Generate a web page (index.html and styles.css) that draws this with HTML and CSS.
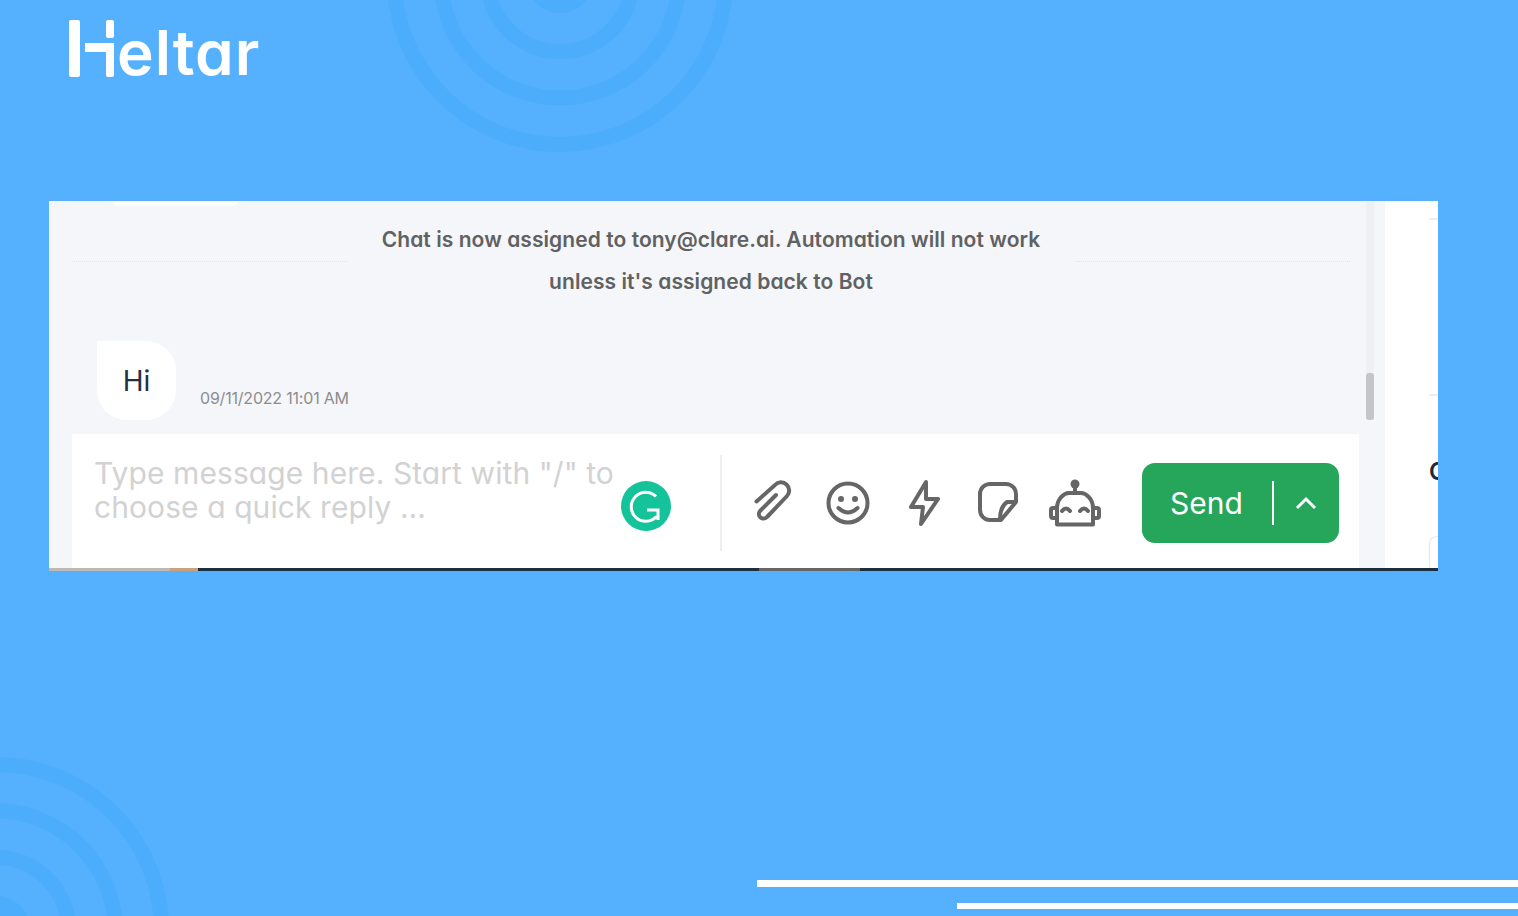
FILE: index.html
```html
<!DOCTYPE html>
<html lang="en">
<head>
    <meta charset="UTF-8">
    <title>Heltar Chat</title>
    <link rel="stylesheet" href="styles.css">
</head>
<body>
    <svg class="rings" width="1518" height="916" viewBox="0 0 1518 916" aria-hidden="true">
        <g class="ring-set">
            <circle cx="560" cy="-21" r="165.5"></circle>
            <circle cx="560" cy="-21" r="119"></circle>
            <circle cx="560" cy="-21" r="72.5"></circle>
            <circle class="ring-core" cx="560" cy="-21" r="34"></circle>
        </g>
        <g class="ring-set">
            <circle cx="-4" cy="930" r="165.5"></circle>
            <circle cx="-4" cy="930" r="119"></circle>
            <circle cx="-4" cy="930" r="72.5"></circle>
            <circle class="ring-core" cx="-4" cy="930" r="34"></circle>
        </g>
    </svg>

    <div class="page">
        <header class="header">
            <div class="logo">
                <div class="logo-h">
                    <span class="logo-stem"></span>
                    <div class="logo-right">
                        <span class="logo-stub"></span>
                        <span class="logo-bar"></span>
                        <span class="logo-leg"></span>
                    </div>
                </div>
                <span class="logo-text">eltar</span>
            </div>
        </header>

        <div class="card">
            <div class="card-body">
                <div class="chat">
                    <div class="thread">
                        <div class="prev-bubble"></div>
                        <div class="system-msg">
                            <span class="system-line"></span>
                            <p>Chat is now assigned to tony@clare.ai. Automation will not work<br>unless it's assigned back to Bot</p>
                            <span class="system-line"></span>
                        </div>
                        <div class="msg-row">
                            <div class="bubble">Hi</div>
                            <span class="msg-time">09/11/2022 11:01 AM</span>
                        </div>
                    </div>

                    <div class="composer">
                        <div class="input-area">
                            <div class="placeholder">Type message here. Start with "/" to<br>choose a quick reply ...</div>
                            <svg class="grammarly" width="50" height="50" viewBox="0 0 50 50">
                                <circle cx="25" cy="25" r="25" fill="#15c39a"></circle>
                                <path d="M35 15.5A14.5 14.5 0 1 0 35.5 35.5M26 29H37V39" fill="none" stroke="#fff" stroke-width="3"></path>
                            </svg>
                        </div>
                        <div class="tools">
                            <span class="tool-cell">
                                <svg class="tool" width="40" height="46" viewBox="0 0 40 46">
                                    <path d="M3.5 21.5L22 5a8 8 0 0 1 12 11L14 37a4.5 4.5 0 0 1-7-6L23 15"></path>
                                </svg>
                            </span>
                            <span class="tool-cell">
                                <svg class="tool" width="48" height="48" viewBox="0 0 48 48">
                                    <circle cx="24" cy="24" r="19.5"></circle>
                                    <circle class="tool-fill" cx="17" cy="20" r="3"></circle>
                                    <circle class="tool-fill" cx="31" cy="20" r="3"></circle>
                                    <path d="M14.5 29Q24 38 33.5 29"></path>
                                </svg>
                            </span>
                            <span class="tool-cell">
                                <svg class="tool" width="34" height="48" viewBox="0 0 34 48">
                                    <path d="M19 3L4 28H16L14 45L31 20H19Z"></path>
                                </svg>
                            </span>
                            <span class="tool-cell">
                                <svg class="tool" width="44" height="44" viewBox="0 0 44 44">
                                    <path d="M13 3H29a10 10 0 0 1 10 10V21L24 39H13a10 10 0 0 1-10-10V13a10 10 0 0 1 10-10Z"></path>
                                    <path d="M38 21H30Q23 26 23 38"></path>
                                </svg>
                            </span>
                            <span class="tool-cell">
                                <svg class="tool" width="52" height="48" viewBox="0 0 52 48">
                                    <circle class="tool-fill" cx="26" cy="5" r="4.5"></circle>
                                    <path d="M26 8V14M8 45.5V29C8 20 15 14 20 14H32C37 14 44 20 44 29V45.5ZM8 29H4a2 2 0 0 0-2 2v6a2 2 0 0 0 2 2H8M44 29H48a2 2 0 0 1 2 2v6a2 2 0 0 1-2 2H44M13 32q4-5 8 0M31 32q4-5 8 0"></path>
                                </svg>
                            </span>
                        </div>
                        <button class="send-btn">
                            <span class="send-label">Send</span>
                            <span class="send-sep"></span>
                            <svg width="24" height="16" viewBox="0 0 24 16">
                                <path d="M3 13L12 4L21 13" fill="none" stroke="#fff" stroke-width="3"></path>
                            </svg>
                        </button>
                    </div>
                </div>

                <div class="gutter">
                    <div class="scroll-track"><div class="scroll-thumb"></div></div>
                </div>

                <aside class="side">
                    <span class="side-tick"></span>
                    <span class="side-tick side-tick-2"></span>
                    <div class="side-title">C</div>
                    <div class="side-box"></div>
                </aside>
            </div>

            <div class="strip">
                <span class="strip-gray"></span>
                <span class="strip-tan"></span>
                <span class="strip-dark"></span>
                <span class="strip-mid"></span>
                <span class="strip-rest"></span>
            </div>
        </div>

        <footer class="footer">
            <span class="bar-long"></span>
            <span class="bar-short"></span>
        </footer>
    </div>
</body>
</html>
```

FILE: styles.css
```css
* {
    box-sizing: border-box;
}

html, body {
    margin: 0;
    height: 100%;
}

body {
    font-family: Inter, "Liberation Sans", sans-serif;
    font-feature-settings: "cv11";
    background-color: #55b0fd;
    overflow: hidden;
}

.rings {
    position: absolute;
    left: 0;
    top: 0;
}

.ring-set circle {
    fill: none;
    stroke: #4badfc;
    stroke-width: 15;
}

.ring-set .ring-core {
    fill: #4badfc;
    stroke: none;
}

.page {
    position: relative;
    height: 916px;
    display: flex;
    flex-direction: column;
}

/* header + logo */
.header {
    height: 201px;
    padding: 20px 0 0 69px;
}

.logo {
    display: flex;
    align-items: flex-end;
    height: 57px;
    color: #fff;
}

.logo-h {
    display: flex;
    gap: 5px;
    height: 57px;
}

.logo-stem {
    width: 11px;
    background: #fff;
    border-radius: 2px;
}

.logo-right {
    width: 29px;
    display: flex;
    flex-direction: column;
    align-items: flex-end;
}

.logo-stub {
    width: 8px;
    height: 18px;
    margin-bottom: 5px;
    background: #fff;
    border-radius: 2px;
}

.logo-bar {
    width: 29px;
    height: 9px;
    background: #fff;
}

.logo-leg {
    width: 8px;
    flex: 1;
    background: #fff;
    border-radius: 0 0 2px 2px;
}

.logo-text {
    margin-left: 3px;
    font-size: 62px;
    font-weight: 600;
    line-height: 57px;
    letter-spacing: 1px;
    position: relative;
    top: 4px;
}

/* card */
.card {
    margin-left: 49px;
    width: 1389px;
    height: 370px;
    display: flex;
    flex-direction: column;
    background: #fff;
}

.card-body {
    flex: 1;
    display: flex;
    min-height: 0;
}

.chat {
    width: 1310px;
    flex-shrink: 0;
    padding-left: 23px;
    display: flex;
    flex-direction: column;
    background: #f4f6fa;
}

.thread {
    flex: 1;
    min-height: 0;
    position: relative;
}

.prev-bubble {
    position: absolute;
    left: 41px;
    top: 0;
    width: 125px;
    height: 5px;
    background: #fff;
    border-radius: 0 0 20px 20px;
}

.system-msg {
    display: flex;
    align-items: center;
    height: 120px;
    padding-right: 9px;
}

.system-msg p {
    flex: 1;
    margin: 0;
    font-size: 21px;
    font-weight: 600;
    line-height: 42px;
    letter-spacing: 0.06px;
    text-align: center;
    color: #616161;
}

.system-line {
    width: 275px;
    border-top: 1px dotted #e0e2e6;
}

.msg-row {
    display: flex;
    align-items: flex-end;
    gap: 24px;
    margin: 20px 0 0 25px;
}

.bubble {
    width: 79px;
    height: 79px;
    display: flex;
    align-items: center;
    justify-content: center;
    background: #fff;
    border-radius: 0 30px 30px 30px;
    font-size: 28px;
    color: #1f3242;
}

.msg-time {
    font-size: 16px;
    line-height: 24px;
    margin-bottom: 10px;
    letter-spacing: -0.2px;
    color: #8d8d8d;
}

.composer {
    height: 134px;
    padding-top: 4px;
    display: flex;
    align-items: center;
    background: #fff;
}

.input-area {
    width: 650px;
    height: 96px;
    padding-left: 22px;
    display: flex;
    border-right: 2px solid #eeeeee;
}

.placeholder {
    width: 527px;
    padding-top: 1px;
    font-size: 30px;
    line-height: 34px;
    letter-spacing: 0.08px;
    white-space: nowrap;
    color: #d2d2d2;
}

.grammarly {
    margin-top: 26px;
}

.tools {
    width: 420px;
    padding-left: 13px;
    display: flex;
    align-items: center;
}

.tool-cell {
    width: 75.5px;
    display: flex;
    justify-content: center;
}

.tool {
    fill: none;
    stroke: #666;
    stroke-width: 4;
    stroke-linecap: round;
    stroke-linejoin: round;
}

.tool .tool-fill {
    fill: #666;
    stroke: none;
}

.send-btn {
    width: 197px;
    height: 80px;
    padding: 0 0 0 28px;
    display: flex;
    align-items: center;
    background: #26a65b;
    border: none;
    border-radius: 13px;
    color: #fff;
    font-family: inherit;
    font-feature-settings: inherit;
    cursor: pointer;
}

.send-label {
    width: 102px;
    text-align: left;
    font-size: 30px;
}

.send-sep {
    width: 2px;
    height: 44px;
    margin-right: 20px;
    background: #fff;
}

.gutter {
    width: 26px;
    flex-shrink: 0;
    padding-left: 7px;
    background: #f4f6fa;
}

.scroll-track {
    width: 8px;
    height: 219px;
    display: flex;
    align-items: flex-end;
    background: #eff0f2;
}

.scroll-thumb {
    width: 8px;
    height: 47px;
    background: #c4c5c7;
    border-radius: 3px;
}

.side {
    flex: 1;
    min-width: 0;
    padding: 17px 0 0 44px;
    overflow: hidden;
    display: flex;
    flex-direction: column;
}

.side-tick {
    height: 2px;
    flex-shrink: 0;
    background: #eeeeee;
}

.side-tick-2 {
    margin-top: 174px;
}

.side-title {
    margin-top: 61px;
    height: 30px;
    font-size: 24px;
    line-height: 30px;
    font-weight: 600;
    color: #1f2a37;
}

.side-box {
    margin-top: 49px;
    flex: 1;
    border: 1px solid #e6e6e6;
    border-right: none;
    border-bottom: none;
    border-radius: 8px 0 0 0;
}

.strip {
    height: 3px;
    display: flex;
    background: #1d2e3e;
}

.strip-gray {
    width: 121px;
    background: #bdb8b5;
}

.strip-tan {
    width: 28px;
    background: #c9a27c;
}

.strip-dark {
    width: 561px;
}

.strip-mid {
    width: 101px;
    background: #666;
}

.strip-rest {
    flex: 1;
}

/* the two white lines bottom right */
.footer {
    margin-top: auto;
    padding-bottom: 7px;
    display: flex;
    flex-direction: column;
    align-items: flex-end;
    gap: 16px;
}

.bar-long {
    width: 761px;
    height: 7px;
    background: #fff;
}

.bar-short {
    width: 561px;
    height: 6px;
    background: #fff;
}
```
